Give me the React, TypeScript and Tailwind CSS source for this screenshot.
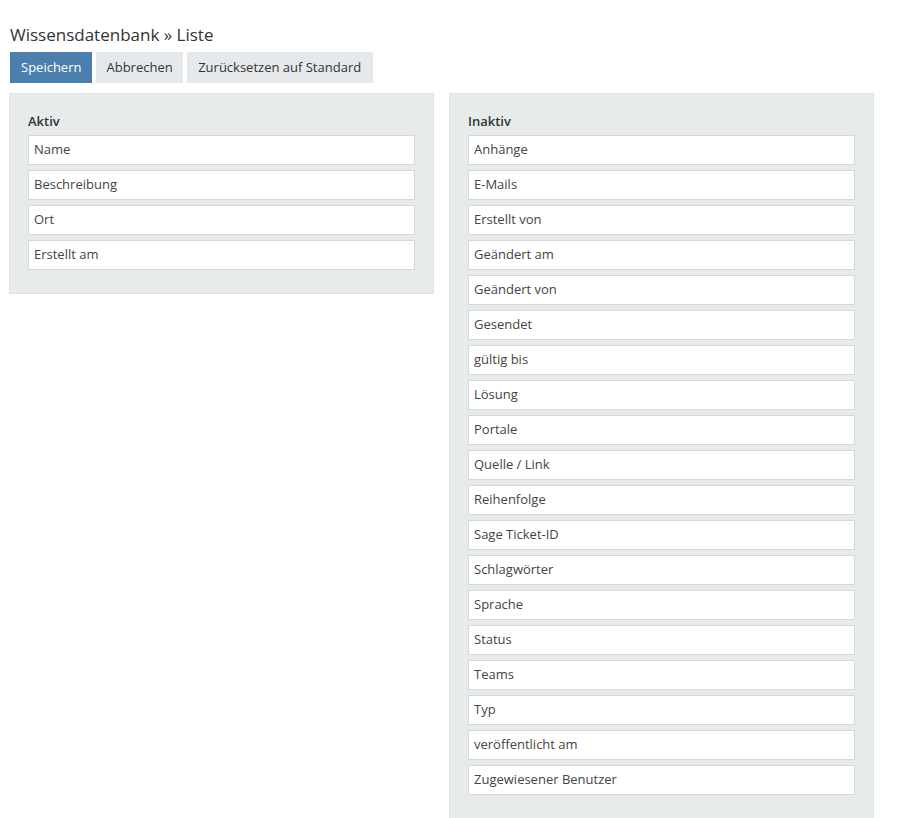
import React from 'react';

const active = ['Name', 'Beschreibung', 'Ort', 'Erstellt am'];
const inactive = [
  'Anhänge',
  'E-Mails',
  'Erstellt von',
  'Geändert am',
  'Geändert von',
  'Gesendet',
  'gültig bis',
  'Lösung',
  'Portale',
  'Quelle / Link',
  'Reihenfolge',
  'Sage Ticket-ID',
  'Schlagwörter',
  'Sprache',
  'Status',
  'Teams',
  'Typ',
  'veröffentlicht am',
  'Zugewiesener Benutzer',
];

function FieldList({ title, items }: { title: string; items: string[] }) {
  return (
    <div className="w-[425px] shrink-0 self-start bg-[#e8ebec] border border-[#dfe2e4] px-[18px] pt-[16px] pb-[23px]">
      <div className="text-[13px] font-semibold text-[#333] leading-[22px] mb-[3px]">{title}</div>
      <div className="flex flex-col gap-[5px]">
        {items.map((item) => (
          <div
            key={item}
            className="h-[30px] bg-white border border-[#d4d8da] px-[5px] flex items-center text-[13px] text-[#444]"
          >
            {item}
          </div>
        ))}
      </div>
    </div>
  );
}

export default function App() {
  return (
    <div className="min-h-screen bg-white px-[9px] pt-[23px]" style={{ fontFamily: '"Open Sans", sans-serif' }}>
      <h1 className="text-[17px] text-[#333] leading-[24px] ml-[1px] mb-[5px]">Wissensdatenbank » Liste</h1>
      <div className="flex gap-[4px] ml-[1px] mb-[10px]">
        <button className="h-[31px] px-[11px] bg-[#4a7fae] text-white text-[13px]">Speichern</button>
        <button className="h-[31px] px-[10px] bg-[#e6e9eb] text-[#333] text-[13px]">Abbrechen</button>
        <button className="h-[31px] px-[11.5px] bg-[#e6e9eb] text-[#333] text-[13px]">Zurücksetzen auf Standard</button>
      </div>
      <div className="flex gap-[15px]">
        <FieldList title="Aktiv" items={active} />
        <FieldList title="Inaktiv" items={inactive} />
      </div>
    </div>
  );
}
